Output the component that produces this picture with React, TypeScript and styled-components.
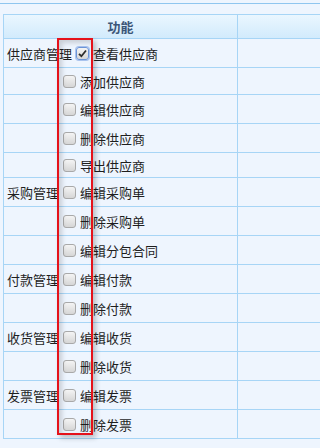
import React from 'react';
import styled, { createGlobalStyle } from 'styled-components';

const GlobalStyle = createGlobalStyle`
  html, body {
    margin: 0;
    padding: 0;
    background: #eef5fe;
    font-family: "Noto Sans CJK SC", "Noto Sans", sans-serif;
    overflow: hidden;
  }
`;

interface Perm {
  group?: string;
  name: string;
  checked?: boolean;
  h: number;
}

const perms: Perm[] = [
  { group: '供应商管理', name: '查看供应商', checked: true, h: 29 },
  { name: '添加供应商', h: 27 },
  { name: '编辑供应商', h: 29 },
  { name: '删除供应商', h: 29 },
  { name: '导出供应商', h: 25 },
  { group: '采购管理', name: '编辑采购单', h: 29 },
  { name: '删除采购单', h: 29 },
  { name: '编辑分包合同', h: 29 },
  { group: '付款管理', name: '编辑付款', h: 29 },
  { name: '删除付款', h: 29 },
  { group: '收货管理', name: '编辑收货', h: 29 },
  { name: '删除收货', h: 29 },
  { group: '发票管理', name: '编辑发票', h: 29 },
  { name: '删除发票', h: 29 },
];

const Page = styled.div`
  position: relative;
  width: 100%;
  min-width: 245px;
  height: 448px;
  padding-top: 3px;
  box-sizing: border-box;
  overflow: hidden;
  background: #eef5fe;
`;

const TopRule = styled.div`
  border-top: 1px solid #8fc6ef;
  margin-bottom: 10px;
`;

const Table = styled.div`
  display: grid;
  grid-template-columns: 234px 1fr;
  margin-left: 3px;
  border-top: 1px solid #a7d5f6;
  border-left: 1px solid #a7d5f6;
`;

const HeadCell = styled.div`
  height: 23px;
  display: flex;
  align-items: center;
  justify-content: center;
  background: linear-gradient(#eaf6ff, #d2ebfc);
  border-right: 1px solid #a7d5f6;
  border-bottom: 1px solid #a7d5f6;
  color: #3b5678;
  font-size: 13px;
  font-weight: 700;
  &:nth-child(2) {
    border-right: none;
  }
`;

const Cell = styled.div<{ $h: number; $last?: boolean }>`
  height: ${p => p.$h - 1}px;
  display: flex;
  align-items: center;
  padding-left: ${p => (p.$last ? 0 : 3)}px;
  border-right: ${p => (p.$last ? 'none' : '1px solid #a7d5f6')};
  border-bottom: 1px solid #a7d5f6;
  font-size: 13px;
  color: #1e1e1e;
  white-space: nowrap;
`;

const Group = styled.span`
  min-width: 52px;
`;

const Box = styled.span<{ $on?: boolean }>`
  width: 11px;
  height: 11px;
  margin: 0 4px;
  border-radius: 3px;
  border: 1px solid ${p => (p.$on ? '#6c95d8' : '#a9a9a9')};
  box-shadow: ${p => (p.$on ? '0 0 0 1px #a9c3ee' : 'none')};
  background: linear-gradient(#f4f4f4, #d6d6d6);
  display: flex;
  align-items: center;
  justify-content: center;
  flex-shrink: 0;
`;

const Annot = styled.div`
  position: absolute;
  left: 57px;
  top: 38px;
  width: 32px;
  height: 393px;
  border: 2px solid #e5121b;
  box-shadow: 3px 3px 5px rgba(0, 0, 0, 0.22), inset 3px 3px 5px rgba(0, 0, 0, 0.16);
  pointer-events: none;
`;

const Check = () => (
  <svg width="9" height="9" viewBox="0 0 9 9">
    <path d="M1 4.8 L3.4 7.2 L8 1.5" fill="none" stroke="#2d2d2d" strokeWidth="1.8" />
  </svg>
);

export default function App() {
  return (
    <Page>
      <GlobalStyle />
      <TopRule />
      <Table>
        <HeadCell>功能</HeadCell>
        <HeadCell />
        {perms.map((p, i) => (
          <React.Fragment key={i}>
            <Cell $h={p.h}>
              <Group>{p.group}</Group>
              <Box $on={p.checked}>{p.checked && <Check />}</Box>
              {p.name}
            </Cell>
            <Cell $h={p.h} $last />
          </React.Fragment>
        ))}
      </Table>
      <Annot />
    </Page>
  );
}
